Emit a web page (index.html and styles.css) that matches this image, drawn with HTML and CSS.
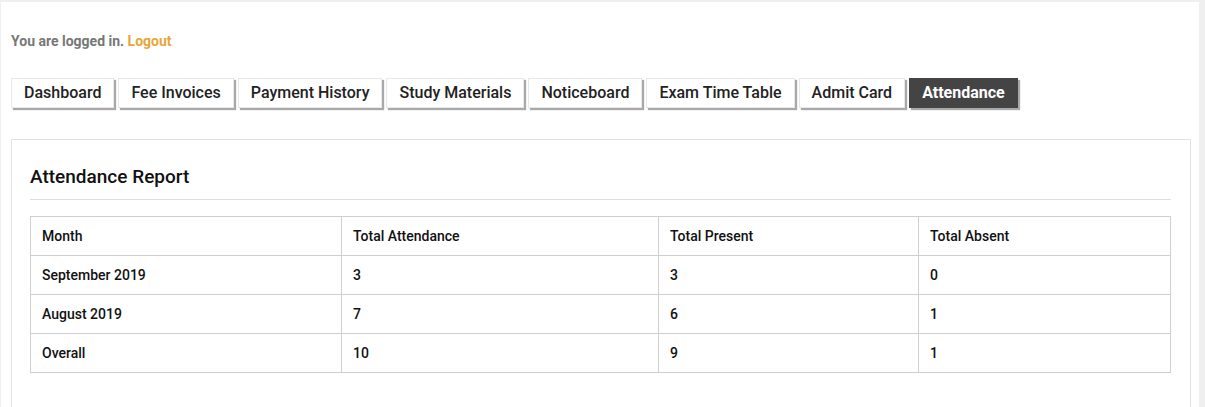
FILE: index.html
```html
<!DOCTYPE html>
<html>
<head>
<meta charset="utf-8">
<link rel="stylesheet" href="styles.css">
</head>
<body>
<div class="panel">
  <p class="login">You are logged in. <a class="logout" href="#">Logout</a></p>
  <nav class="tabs">
    <a class="tab" href="#">Dashboard</a>
    <a class="tab" href="#">Fee Invoices</a>
    <a class="tab" href="#">Payment History</a>
    <a class="tab" href="#">Study Materials</a>
    <a class="tab" href="#">Noticeboard</a>
    <a class="tab" href="#">Exam Time Table</a>
    <a class="tab" href="#">Admit Card</a>
    <a class="tab active" href="#">Attendance</a>
  </nav>
  <section class="card">
    <h2 class="card-title">Attendance Report</h2>
    <table class="report">
      <colgroup>
        <col class="c1"><col class="c2"><col class="c3"><col class="c4">
      </colgroup>
      <tr><td>Month</td><td>Total Attendance</td><td>Total Present</td><td>Total Absent</td></tr>
      <tr><td>September 2019</td><td>3</td><td>3</td><td>0</td></tr>
      <tr><td>August 2019</td><td>7</td><td>6</td><td>1</td></tr>
      <tr><td>Overall</td><td>10</td><td>9</td><td>1</td></tr>
    </table>
  </section>
</div>
</body>
</html>
```
FILE: styles.css
```css
html, body {
  height: 100%;
}
body {
  margin: 0;
  padding: 2px 6px 0 1px;
  box-sizing: border-box;
  background: #efefef;
  font-family: Roboto, "Liberation Sans", Arial, sans-serif;
  color: #222;
  overflow: hidden;
}
.panel {
  background: #fff;
  height: 100%;
  padding: 30px 8px 0 10px;
  box-sizing: border-box;
  overflow: hidden;
}
.login {
  margin: 0;
  font-size: 14px;
  font-weight: 700;
  line-height: 18px;
  color: #777;
}
.logout {
  color: #e8a63a;
  text-decoration: none;
}
.tabs {
  display: flex;
  gap: 4px;
  margin-top: 28px;
}
.tab {
  display: block;
  height: 30px;
  line-height: 28px;
  padding: 0 12px;
  border: 1px solid #e8e8e8;
  box-sizing: border-box;
  background: #fff;
  color: #222;
  font-size: 16px;
  font-weight: 500;
  text-decoration: none;
  box-shadow: 2px 2px 1px #a9a9a9;
}
.tab.active {
  background: #444;
  border-color: #444;
  color: #fff;
  font-weight: 700;
}
.card {
  margin-top: 31px;
  border: 1px solid #e2e2e2;
  padding: 24px 19px 60px 18px;
}
.card-title {
  margin: 0;
  padding-bottom: 9px;
  border-bottom: 1px solid #dedede;
  font-size: 19px;
  font-weight: 500;
  line-height: 26px;
  color: #111;
}
.report {
  margin-top: 16px;
  width: 100%;
  border-collapse: collapse;
  font-size: 14px;
  font-weight: 500;
  color: #111;
}
.report td {
  border: 1px solid #cfcfcf;
  height: 39px;
  padding: 0 11px 1px;
  box-sizing: border-box;
}
.c1 { width: 311px; }
.c2 { width: 317px; }
.c3 { width: 260px; }
```
